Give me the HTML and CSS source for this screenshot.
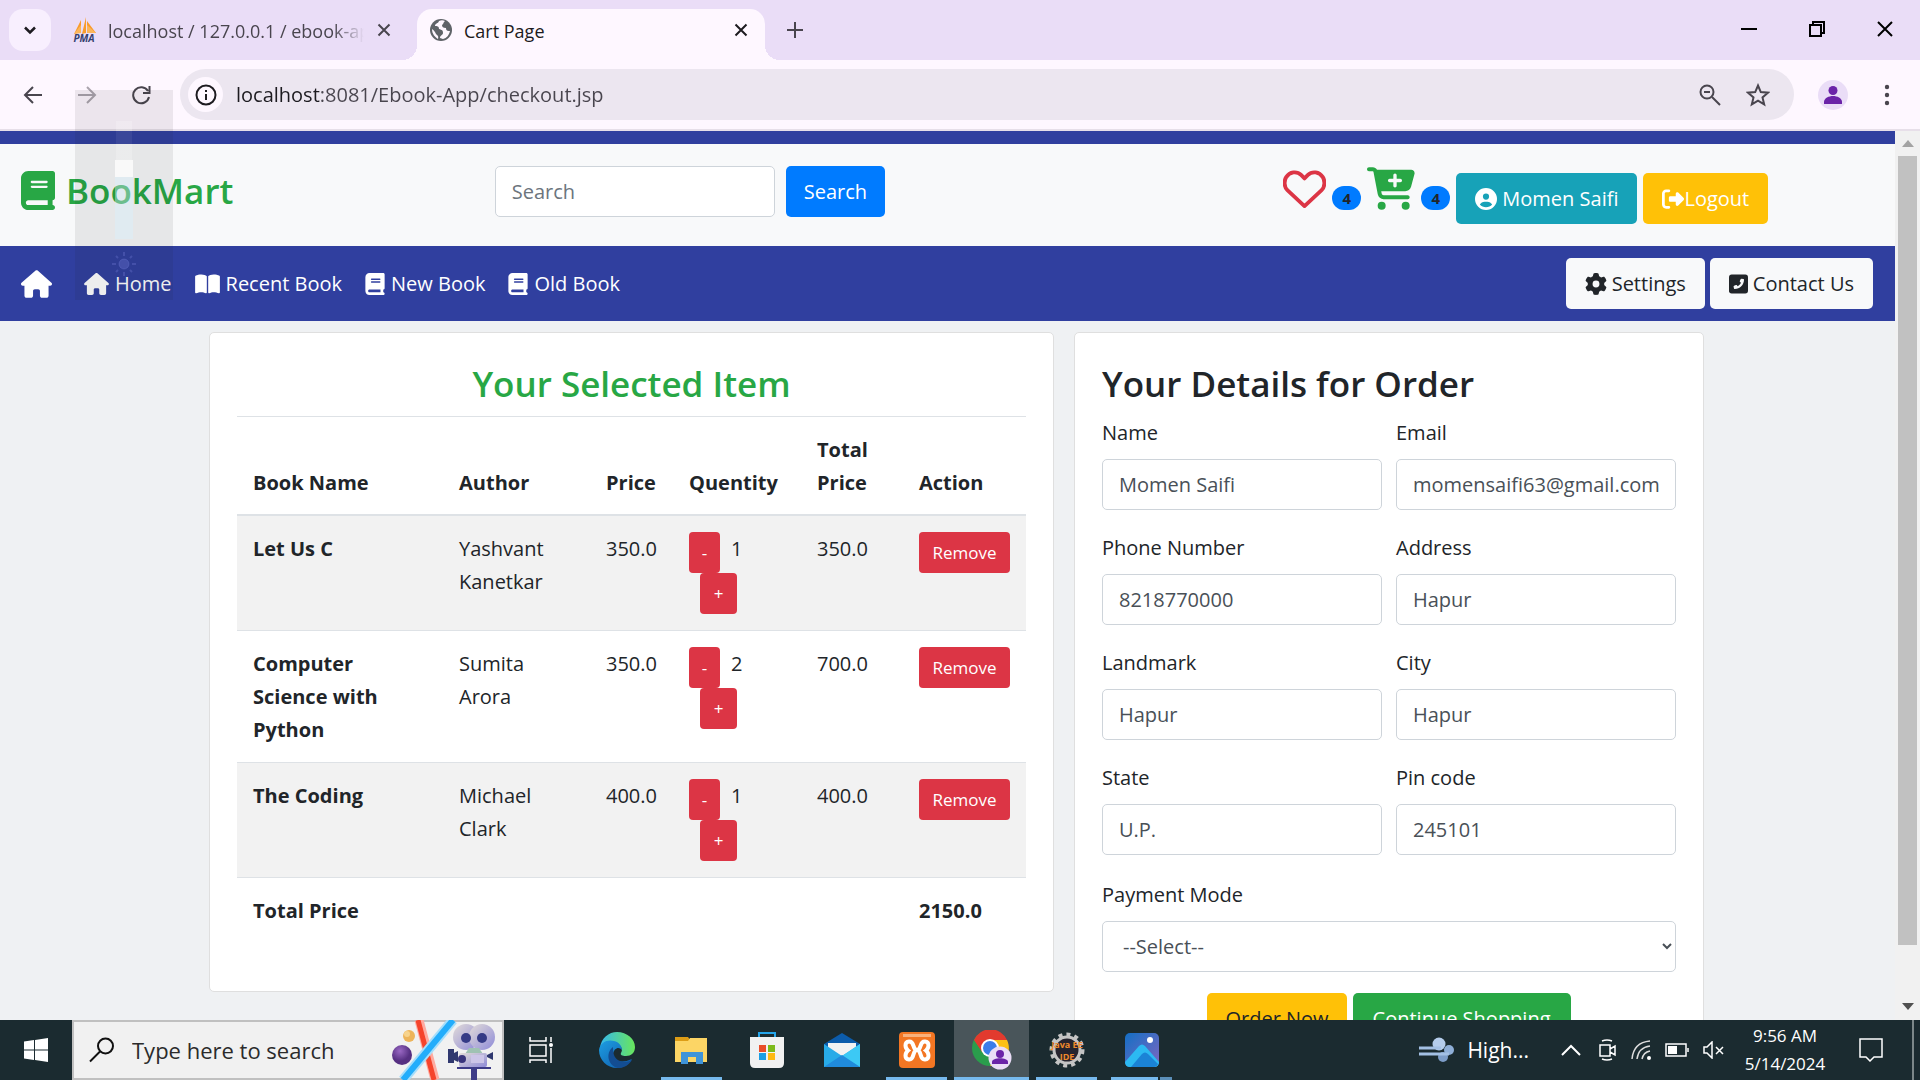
FILE: index.html
```html
<!DOCTYPE html>
<html lang="en">
<head>
<meta charset="utf-8">
<title>Cart Page</title>
<link rel="stylesheet" href="styles.css">
</head>
<body>
<svg class="symbols" aria-hidden="true">
  <symbol id="book" viewBox="0 0 448 512"><path d="M96 0C43 0 0 43 0 96V416c0 53 43 96 96 96H384h32c17.700 0 32-14.300 32-32s-14.300-32-32-32V384c17.700 0 32-14.300 32-32V32c0-17.700-14.300-32-32-32H384 96zm0 384H352v64H96c-17.700 0-32-14.300-32-32s14.300-32 32-32zm32-240c0-8.800 7.200-16 16-16H336c8.800 0 16 7.200 16 16s-7.200 16-16 16H144c-8.800 0-16-7.200-16-16zm16 48H336c8.800 0 16 7.200 16 16s-7.200 16-16 16H144c-8.800 0-16-7.200-16-16s7.200-16 16-16z"/></symbol>
  <symbol id="house" viewBox="0 0 576 512"><path d="M575.800 255.500c0 18-15 32.100-32 32.100h-32l.7 160.200c0 2.700-.2 5.400-.5 8.100V472c0 22.100-17.900 40-40 40H392c-22.100 0-40-17.900-40-40V384c0-17.700-14.300-32-32-32H256c-17.700 0-32 14.300-32 32v88c0 22.100-17.900 40-40 40H104c-22.100 0-40-17.900-40-40V287.600H32c-18 0-32-14-32-32.100c0-9 3-17 10-24L266.400 8c7-7 15-8 22-8s15 2 21 7L564.800 231.500c8 7 12 15 11 24z"/></symbol>
  <symbol id="book-open" viewBox="0 0 576 512"><path d="M249.600 471.500c10.800 3.800 22.400-4.100 22.400-15.500V78.600c0-4.200-1.600-8.400-5-11C247.400 52 202.400 32 144 32C93.500 32 46.300 45.300 18.100 56.100C6.800 60.500 0 71.700 0 83.800V454.100c0 11.900 12.800 20.200 24.100 16.500C55.600 460.100 105.500 448 144 448c33.900 0 79 14 105.600 23.500zm76.800 0C353 462 398.100 448 432 448c38.500 0 88.400 12.100 119.900 22.600c11.300 3.800 24.100-4.600 24.100-16.500V83.800c0-12.100-6.800-23.300-18.100-27.600C529.700 45.300 482.500 32 432 32c-58.400 0-103.400 20-123 35.600c-3.300 2.600-5 6.800-5 11V456c0 11.400 11.700 19.300 22.400 15.500z"/></symbol>
  <symbol id="cross" viewBox="0 0 16 16"><path d="M2.500 2.500l11 11M13.500 2.500l-11 11" stroke="currentColor" stroke-width="2" fill="none"/></symbol>
</svg>

<div class="tabstrip">
  <button class="tab-search" aria-label="Search tabs"><svg width="16" height="16" viewBox="0 0 16 16"><path d="M3 5.500l5 5 5-5" fill="none" stroke="#1d1b20" stroke-width="2.500"/></svg></button>
  <div class="tab">
    <svg class="favicon" width="24" height="28" viewBox="0 0 24 28"><path d="M2 18L9 4v12zM10 18L14 1v16zM15 17V5l9 12z" fill="#f89c2c"/><path d="M2 18l7-9v8zM15 17V9l9 8z" fill="#fbb65b"/><text x="12" y="26" text-anchor="middle" class="pma">PMA</text></svg>
    <span class="tab-title fading">localhost / 127.0.0.1 / ebook-app</span>
    <button class="plain" aria-label="Close tab"><svg width="16" height="16"><use href="#cross"/></svg></button>
  </div>
  <div class="tab active">
    <svg width="22" height="22" viewBox="0 0 22 22"><circle cx="11" cy="11" r="11" fill="#5f6368"/><path d="M9 2c-1 3-4 2-4 5 2 0 4 0 4 3 3 1 4 1 4 4 0 2-3 2-3 5l3 1c4-1 6-4 7-8-2 0-4 0-4-3-3 0-4-1-4-3 2-1 1-3 3-4-2-1-4-1-6 0zM2 10c0 5 3 8 6 10 1-3-1-4-2-5-1-2-2-4-4-5z" fill="#fef7ff"/></svg>
    <span class="tab-title">Cart Page</span>
    <button class="plain" aria-label="Close tab"><svg width="16" height="16"><use href="#cross"/></svg></button>
  </div>
  <button class="plain new-tab" aria-label="New tab"><svg width="18" height="18" viewBox="0 0 18 18"><path d="M9 1v16M1 9h16" stroke="#49454e" stroke-width="2"/></svg></button>
  <div class="window-controls">
    <button class="plain" aria-label="Minimize"><svg width="16" height="16" viewBox="0 0 16 16"><path d="M0 8h16" stroke="#000" stroke-width="2"/></svg></button>
    <button class="plain" aria-label="Restore"><svg width="16" height="16" viewBox="0 0 16 16"><path d="M1 4h11v11H1zM4 4V1h11v11h-3" fill="none" stroke="#000" stroke-width="2"/></svg></button>
    <button class="plain" aria-label="Close"><svg width="16" height="16" viewBox="0 0 16 16"><path d="M1 1l14 14M15 1L1 15" stroke="#000" stroke-width="2"/></svg></button>
  </div>
</div>

<div class="toolbar">
  <div class="history">
    <button class="plain" aria-label="Back"><svg width="20" height="20" viewBox="0 0 20 20"><path d="M19 10H2M10 2l-8 8 8 8" fill="none" stroke="#49454e" stroke-width="2"/></svg></button>
    <button class="plain" aria-label="Forward"><svg width="20" height="20" viewBox="0 0 20 20"><path d="M1 10h17M10 2l8 8-8 8" fill="none" stroke="#aaa3ad" stroke-width="2"/></svg></button>
    <button class="plain" aria-label="Reload"><svg width="20" height="20" viewBox="0 0 20 20"><path d="M17 6A8 8 0 1 0 18 12M18.500 1v7H12" fill="none" stroke="#49454e" stroke-width="2"/></svg></button>
  </div>
  <div class="omnibox">
    <button class="site-info" aria-label="Site information"><svg width="22" height="22" viewBox="0 0 22 22"><circle cx="11" cy="11" r="9.500" fill="none" stroke="#1d1b20" stroke-width="2"/><path d="M11 10v6M11 6v2" stroke="#1d1b20" stroke-width="2"/></svg></button>
    <input class="url" type="text" aria-label="Address" value="localhost:8081/Ebook-App/checkout.jsp">
    <button class="plain" aria-label="Zoom"><svg width="22" height="22" viewBox="0 0 22 22"><circle cx="8" cy="8" r="6.500" fill="none" stroke="#49454e" stroke-width="2"/><path d="M5 8h6M13 13l8 8" stroke="#49454e" stroke-width="2"/></svg></button>
    <button class="plain" aria-label="Bookmark"><svg width="24" height="24" viewBox="0 0 24 24"><path d="M12 2.500l2.800 6.600 7.200.6-5.500 4.700 1.700 7L12 17.700l-6.200 3.700 1.700-7L2 9.700l7.200-.6z" fill="none" stroke="#49454e" stroke-width="2"/></svg></button>
  </div>
  <button class="plain profile" aria-label="Profile"><svg width="30" height="30" viewBox="0 0 30 30"><circle cx="15" cy="15" r="15" fill="#eaddf7"/><circle cx="15" cy="10.500" r="4.500" fill="#6b23a8"/><path d="M6 24v-2c0-4 5-6 9-6s9 2 9 6v2z" fill="#6b23a8"/></svg></button>
  <button class="plain" aria-label="Menu"><svg width="6" height="22" viewBox="0 0 6 22"><g fill="#49454e"><circle cx="3" cy="3" r="2.200"/><circle cx="3" cy="11" r="2.200"/><circle cx="3" cy="19" r="2.200"/></g></svg></button>
</div>

<div class="viewport">
  <div class="page">
    <div class="topline"></div>
    <header class="header">
      <h3 class="brand"><svg width="34" height="39"><use href="#book"/></svg>BookMart</h3>
      <form class="search">
        <input class="control" type="search" placeholder="Search" aria-label="Search">
        <button class="btn primary" type="button">Search</button>
      </form>
      <div class="actions">
        <a href="#" class="icon-link" aria-label="Wishlist"><svg width="43" height="43" viewBox="0 0 512 512"><path d="M256 465L52 276C10 237 12 160 38 120 80 55 165 45 215 95l41 41 41-41c50-50 135-40 177 25 26 40 28 117-14 156z" fill="none" stroke="#dc3545" stroke-width="46" stroke-linejoin="round"/></svg></a>
        <span class="badge">4</span>
        <a href="#" class="icon-link" aria-label="Cart"><svg width="48" height="43" viewBox="0 0 576 512"><path fill="#28a745" fill-rule="evenodd" d="M0 24C0 10.700 10.700 0 24 0H69.500c22 0 41.500 12.800 50.600 32h411c26.300 0 45.500 25 38.600 50.400l-41 152.300c-8.500 31.400-37 53.300-69.500 53.300H170.700l5.400 28.500c2.200 11.300 12.100 19.500 23.600 19.500H488c13.300 0 24 10.700 24 24s-10.700 24-24 24H199.700c-34.600 0-64.300-24.600-70.700-58.500L77.400 54.500c-.7-3.800-4-6.500-7.900-6.500H24C10.700 48 0 37.300 0 24zM128 464a48 48 0 1 1 96 0 48 48 0 1 1-96 0zm336-48a48 48 0 1 1 0 96 48 48 0 1 1 0-96zM252 160c0 11 9 20 20 20h44v44c0 11 9 20 20 20s20-9 20-20V180h44c11 0 20-9 20-20s-9-20-20-20H356V96c0-11-9-20-20-20s-20 9-20 20v44H272c-11 0-20 9-20 20z"/></svg></a>
        <span class="badge">4</span>
        <a href="#" class="btn info"><svg width="22" height="22" viewBox="0 0 512 512"><path d="M399 384C377 346 335 320 288 320H224c-47 0-89 26-111 64c35 39 86 64 143 64s108-25 143-64zM0 256a256 256 0 1 1 512 0A256 256 0 1 1 0 256zm256 16a72 72 0 1 0 0-144 72 72 0 1 0 0 144z"/></svg>Momen Saifi</a>
        <a href="#" class="btn warning logout"><svg width="22" height="22" viewBox="0 0 512 512"><path d="M377.900 105.900L500.700 228.700c7.200 7.200 11.300 17.100 11.300 27.300s-4.100 20.100-11.300 27.300L377.900 406.100c-6.400 6.400-15 9.900-24 9.900c-18.700 0-33.900-15.200-33.900-33.900v-62.100h-128c-17.700 0-32-14.300-32-32v-64c0-17.700 14.300-32 32-32h128v-62.100c0-18.700 15.200-33.900 33.900-33.900c9 0 17.600 3.600 24 9.900zM160 96H96c-17.700 0-32 14.300-32 32v256c0 17.700 14.300 32 32 32h64c17.700 0 32 14.300 32 32s-14.300 32-32 32H96c-53 0-96-43-96-96V128C0 75 43 32 96 32h64c17.700 0 32 14.300 32 32s-14.300 32-32 32z"/></svg>Logout</a>
      </div>
    </header>
    <nav class="nav">
      <a href="#" class="nav-brand" aria-label="Start page"><svg width="31" height="28"><use href="#house"/></svg></a>
      <a href="#"><svg width="25" height="22"><use href="#house"/></svg>Home</a>
      <a href="#"><svg width="25" height="22"><use href="#book-open"/></svg>Recent Book</a>
      <a href="#"><svg width="20" height="22"><use href="#book"/></svg>New Book</a>
      <a href="#"><svg width="20" height="22"><use href="#book"/></svg>Old Book</a>
      <div class="nav-end">
        <a href="#" class="btn light"><svg width="22" height="22" viewBox="0 0 512 512"><path d="M495.900 166.600c3.200 8.700 .5 18.400-6.400 24.600l-43.300 39.400c1.100 8.300 1.700 16.800 1.700 25.400s-.6 17.100-1.700 25.400l43.300 39.400c6.900 6.200 9.600 15.900 6.400 24.600c-4.400 11.900-9.700 23.300-15.800 34.300l-4.700 8.100c-6.600 11-14 21.400-22.100 31.200c-5.900 7.200-15.700 9.600-24.500 6.800l-55.700-17.700c-13.400 10.300-28.200 18.900-44 25.400l-12.500 57.100c-2 9.100-9 16.300-18.200 17.800c-13.800 2.300-28 3.500-42.500 3.500s-28.700-1.200-42.500-3.500c-9.200-1.500-16.200-8.700-18.200-17.800l-12.500-57.100c-15.800-6.500-30.600-15.100-44-25.400L83.100 425.900c-8.800 2.800-18.600 .3-24.500-6.800c-8.100-9.800-15.500-20.200-22.100-31.200l-4.700-8.100c-6.100-11-11.400-22.400-15.800-34.300c-3.200-8.700-.5-18.400 6.400-24.600l43.300-39.400C64.600 273.100 64 264.600 64 256s.6-17.100 1.700-25.400L22.400 191.200c-6.900-6.200-9.600-15.900-6.400-24.600c4.400-11.900 9.700-23.300 15.800-34.300l4.700-8.100c6.600-11 14-21.400 22.100-31.200c5.900-7.200 15.700-9.600 24.500-6.800l55.700 17.700c13.400-10.300 28.200-18.900 44-25.400l12.500-57.100c2-9.100 9-16.300 18.200-17.800C227.300 1.200 241.500 0 256 0s28.700 1.200 42.500 3.500c9.200 1.500 16.200 8.700 18.200 17.800l12.500 57.100c15.800 6.500 30.600 15.100 44 25.400l55.700-17.700c8.800-2.800 18.600-.3 24.500 6.800c8.100 9.800 15.500 20.200 22.100 31.200l4.700 8.100c6.100 11 11.400 22.400 15.800 34.300zM256 336a80 80 0 1 0 0-160 80 80 0 1 0 0 160z"/></svg>Settings</a>
        <a href="#" class="btn light"><svg width="19" height="22" viewBox="0 0 448 512"><rect y="32" width="448" height="448" rx="64"/><path fill="#f8f9fa" d="M298 130l42 10c8 2 14 9 14 18 0 120-98 218-218 218-9 0-16-6-18-14l-10-42c-2-9 2-18 11-22l45-19c8-3 17-1 22 5l19 23c34-16 62-44 78-78l-23-19c-6-5-8-14-5-22l19-45c4-9 14-15 24-13z"/></svg>Contact Us</a>
      </div>
    </nav>

    <main class="content">
      <section class="card">
        <h3 class="title green">Your Selected Item</h3>
        <table class="items">
          <colgroup><col class="c-name"><col class="c-author"><col class="c-price"><col class="c-qty"><col class="c-total"><col class="c-action"></colgroup>
          <thead><tr><th scope="col">Book Name</th><th scope="col">Author</th><th scope="col">Price</th><th scope="col">Quentity</th><th scope="col">Total Price</th><th scope="col">Action</th></tr></thead>
          <tbody>
            <tr><th scope="row">Let Us C</th><td>Yashvant Kanetkar</td><td>350.0</td><td><div class="qty"><button class="btn-sm minus">-</button><span>1</span><button class="btn-sm plus">+</button></div></td><td>350.0</td><td><button class="btn-sm remove">Remove</button></td></tr>
            <tr><th scope="row">Computer Science with Python</th><td>Sumita Arora</td><td>350.0</td><td><div class="qty"><button class="btn-sm minus">-</button><span>2</span><button class="btn-sm plus">+</button></div></td><td>700.0</td><td><button class="btn-sm remove">Remove</button></td></tr>
            <tr><th scope="row">The Coding</th><td>Michael Clark</td><td>400.0</td><td><div class="qty"><button class="btn-sm minus">-</button><span>1</span><button class="btn-sm plus">+</button></div></td><td>400.0</td><td><button class="btn-sm remove">Remove</button></td></tr>
            <tr><th scope="row">Total Price</th><td></td><td></td><td></td><td></td><th>2150.0</th></tr>
          </tbody>
        </table>
      </section>

      <section class="card">
        <h3 class="title">Your Details for Order</h3>
        <form class="details">
          <div class="field"><label for="name">Name</label><input class="control" id="name" type="text" value="Momen Saifi"></div>
          <div class="field"><label for="email">Email</label><input class="control" id="email" type="text" value="momensaifi63@gmail.com"></div>
          <div class="field"><label for="phone">Phone Number</label><input class="control" id="phone" type="text" value="8218770000"></div>
          <div class="field"><label for="address">Address</label><input class="control" id="address" type="text" value="Hapur"></div>
          <div class="field"><label for="landmark">Landmark</label><input class="control" id="landmark" type="text" value="Hapur"></div>
          <div class="field"><label for="city">City</label><input class="control" id="city" type="text" value="Hapur"></div>
          <div class="field"><label for="state">State</label><input class="control" id="state" type="text" value="U.P."></div>
          <div class="field"><label for="pin">Pin code</label><input class="control" id="pin" type="text" value="245101"></div>
          <div class="field wide"><label for="payment">Payment Mode</label><select class="control" id="payment"><option>--Select--</option><option>Cash On Delivery</option></select></div>
          <div class="submit wide"><button class="btn warning dark" type="button">Order Now</button><a href="#" class="btn success">Continue Shopping</a></div>
        </form>
      </section>
    </main>
  </div>
  <div class="scrollbar">
    <svg width="12" height="8" viewBox="0 0 12 8"><path d="M6 0l6 7H0z" fill="#a3a3a3"/></svg>
    <div class="track"><div class="thumb"></div></div>
    <svg width="12" height="8" viewBox="0 0 12 8"><path d="M6 7l6-7H0z" fill="#505050"/></svg>
  </div>
</div>

<div class="flyout">
  <div class="level-rest"></div><div class="level-thumb"></div><div class="level-fill"></div>
  <svg width="26" height="26" viewBox="0 0 26 26"><circle cx="13" cy="13" r="5"/><path d="M13 1v4M13 21v4M1 13h4M21 13h4M5 5l2 2M19 19l2 2M21 5l-2 2M5 21l2-2" stroke-width="2"/></svg>
</div>

<footer class="taskbar">
  <button class="plain start" aria-label="Start"><svg width="24" height="24" viewBox="0 0 24 24"><path d="M0 3.500l10-1.500v9.500H0zM11 2l13-2v11.500H11zM0 12.500h10V22L0 20.500zM11 12.500h13V24l-13-2z" fill="#fff"/></svg></button>
  <div class="task-search">
    <svg width="26" height="26" viewBox="0 0 26 26"><circle cx="16.500" cy="9" r="7.500" fill="none" stroke="#111" stroke-width="2"/><path d="M11 14.500L1 24.500" stroke="#111" stroke-width="2"/></svg>
    <input type="text" placeholder="Type here to search" aria-label="Type here to search">
    <svg width="106" height="60" viewBox="0 0 106 60">
      <defs><linearGradient id="cam" x1="0" y1="0" x2="1" y2="1"><stop offset="0" stop-color="#e2dcd8"/><stop offset="1" stop-color="#8f8bd8"/></linearGradient><radialGradient id="moon" cx=".4" cy=".3"><stop offset="0" stop-color="#9a68c4"/><stop offset="1" stop-color="#563082"/></radialGradient></defs>
      <path d="M27 0L43 60" stroke="#ffaa9f" stroke-width="9"/><path d="M26 0L42 60" stroke="#f5442c" stroke-width="5"/>
      <path d="M61 0L11 60" stroke="#a5defb" stroke-width="10"/><path d="M61 0L11 60" stroke="#22adfb" stroke-width="6"/>
      <circle cx="10" cy="35" r="10" fill="url(#moon)"/><circle cx="17" cy="16" r="6" fill="#edb45a"/><circle cx="15" cy="14" r="3" fill="#f7d38c"/>
      <circle cx="74" cy="17" r="13" fill="url(#cam)"/><circle cx="90" cy="17" r="13" fill="url(#cam)"/><circle cx="74" cy="18" r="5" fill="#343a86"/><circle cx="90" cy="18" r="5" fill="#343a86"/>
      <path d="M77 28h10l4 6H73z" fill="#9fc2b3"/><rect x="67" y="33" width="28" height="14" rx="2" fill="url(#cam)"/><rect x="79" y="35" width="13" height="8" fill="#ccc5e8"/><path d="M56 29h6v14h-6zM62 33l4-2v11l-4-2zM95 35l6-3v8l-6-3z" fill="#30386f"/><circle cx="70" cy="39" r="4" fill="#39347c"/><path d="M65 47h34v2H65zM79 49h6v11h-6z" fill="#3d3b88"/>
    </svg>
  </div>
  <div class="apps">
    <button class="app" aria-label="Task view"><svg width="26" height="26" viewBox="0 0 26 26"><path d="M1 0v4h16V0M1 8h16v11H1zM1 26v-3h16v3M22 0v5M22 11v15" fill="none" stroke="#fff" stroke-width="1.500"/><circle cx="22" cy="8" r="2" fill="#fff"/></svg></button>
    <button class="app" aria-label="Edge"><svg width="36" height="36" viewBox="0 0 36 36"><defs><linearGradient id="e1"><stop offset="0" stop-color="#35b8ee"/><stop offset="1" stop-color="#69e65b"/></linearGradient><linearGradient id="e2" x2="1" y2="1"><stop offset="0" stop-color="#1d9ee2"/><stop offset="1" stop-color="#0f58a8"/></linearGradient></defs><path d="M1 16C2 6 10 0 18 0c10 0 18 7 18 15 0 6-4 9-9 9-4 0-6-1-5-3 2-3 1-8-5-8-6-1-13 0-16 3z" fill="url(#e1)"/><path d="M0 18c1-8 9-11 15-9 5 1 8 5 8 9-3-4-8-2-9 4 0 7 8 10 19 5-4 6-9 9-15 9C8 36 0 28 0 18z" fill="url(#e2)"/><path d="M14 15c-8 6-5 19 5 21 6 0 11-3 14-8-8 4-16 1-18-5-1-3-1-5-1-8z" fill="#134d92"/></svg></button>
    <button class="app running" aria-label="File Explorer"><svg width="34" height="28" viewBox="0 0 34 28"><path d="M0 1h13l3 4H0z" fill="#dd9d16"/><path d="M0 5h13l2-3h17v24H0z" fill="#fcd565"/><path d="M6 28V16h22v12h-7v-7h-8v7z" fill="#3f94d9"/></svg></button>
    <button class="app" aria-label="Store"><svg width="34" height="36" viewBox="0 0 34 36"><path d="M9 6V1h16v5" fill="none" stroke="#25a5ea" stroke-width="2"/><path d="M0 5h34v26q0 5-5 5H5q-5 0-5-5z" fill="#f1f1f1"/><path d="M9 13h7v7H9z" fill="#e94d29"/><path d="M18 13h7v7h-7z" fill="#7dba1b"/><path d="M9 21h7v7H9z" fill="#1c9ee3"/><path d="M18 21h7v7h-7z" fill="#fdb913"/></svg></button>
    <button class="app" aria-label="Mail"><svg width="36" height="34" viewBox="0 0 36 34"><path d="M0 11L18 0l18 11v8H0z" fill="#0c5cab"/><path d="M4 10h28v10L18 23 4 20z" fill="#f2f2f2"/><path d="M0 11l18 12L36 11v23H0z" fill="#28abe8"/><path d="M36 11L18 23l18 11z" fill="#3cc9f5"/><path d="M0 34l18-12 18 12z" fill="#208bdc"/></svg></button>
    <button class="app running" aria-label="XAMPP"><svg width="36" height="36" viewBox="0 0 36 36"><rect width="36" height="36" rx="4" fill="#f37623"/><path d="M4 2h28v3H4z" fill="#f9b17c"/><path d="M18 18C13 18 16 9 10 9.500 5 10 6 16 9 18.500 6 21 5 27 10 27.500 16 28 13 18 18 18zM18 18C23 18 20 9 26 9.500 31 10 30 16 27 18.500 30 21 31 27 26 27.500 20 28 23 18 18 18z" fill="none" stroke="#fff" stroke-width="4"/></svg></button>
    <button class="app running current" aria-label="Chrome"><svg width="40" height="40" viewBox="0 0 40 40"><circle cx="18" cy="18" r="18" fill="#2a9d4c"/><path d="M2 10A18 18 0 0 1 35 10H18l-8 12z" fill="#e23a2e"/><path d="M35 10a18 18 0 0 1-17 26l8-14-8-12z" fill="#fbc116"/><circle cx="18" cy="18" r="9" fill="#fff"/><circle cx="18" cy="18" r="7" fill="#3b7de9"/><circle cx="28" cy="28" r="11.500" fill="#eaddf7"/><circle cx="28" cy="24" r="4" fill="#6b23a8"/><path d="M20 34v-2c0-5 16-5 16 0v2z" fill="#6b23a8"/></svg></button>
    <button class="app running" aria-label="Java EE IDE"><svg width="42" height="36" viewBox="0 0 42 36"><circle cx="21" cy="18" r="13" fill="#26242e" stroke="#c4c4c4" stroke-width="3"/><circle cx="21" cy="18" r="15.500" fill="none" stroke="#c4c4c4" stroke-width="4" stroke-dasharray="4 4"/><text x="21" y="16" text-anchor="middle" class="ide">Java EE</text><text x="21" y="28" text-anchor="middle" class="ide">IDE</text></svg></button>
    <button class="app running stacked" aria-label="Photos"><svg width="34" height="34" viewBox="0 0 34 34"><defs><linearGradient id="ph" x2="1" y2="1"><stop offset="0" stop-color="#136fc5"/><stop offset="1" stop-color="#7f67c0"/></linearGradient></defs><rect width="34" height="34" rx="5" fill="url(#ph)"/><circle cx="25" cy="7" r="3" fill="#fff"/><path d="M0 29l14-16q3-3 6 0l14 16q0 5-5 5H5q-5 0-5-5z" fill="#2cb9f2"/><path d="M6 34l11-13q3-3 6 0l10 10q-1 3-4 3z" fill="#1b83d6"/></svg></button>
  </div>
  <div class="tray">
    <a href="#" class="weather"><svg width="36" height="26" viewBox="0 0 36 26"><circle cx="20" cy="7" r="6.500" fill="#b5cdec"/><circle cx="30" cy="13" r="5" fill="#8fafd8"/><circle cx="24" cy="20" r="5" fill="#7d9dc8"/><path d="M0 11h22M0 17h30" stroke="#a3c0e4" stroke-width="3"/></svg>High...</a>
    <button class="plain overflow" aria-label="Hidden icons"><svg width="20" height="12" viewBox="0 0 20 12"><path d="M1 11l9-9 9 9" fill="none" stroke="#fff" stroke-width="2"/></svg></button>
    <svg width="18" height="22" viewBox="0 0 18 22"><path d="M1 6h10v11H1zM11 10l5-3v9l-5-3M3 2q5-2 10 0M3 20q5 2 10 0" fill="none" stroke="#fff" stroke-width="1.500"/></svg>
    <svg width="20" height="20" viewBox="0 0 20 20"><path d="M1 19C2 8 8 2 19 1M6 19C7 11 11 7 19 6M11 19c1-5 3-7 8-8" fill="none" stroke="#ddd" stroke-width="1.500"/><circle cx="18" cy="18" r="2" fill="#fff"/></svg>
    <svg width="24" height="14" viewBox="0 0 24 14"><path d="M1 1h20v12H1zM23 5v4" fill="none" stroke="#fff" stroke-width="1.500"/><path d="M3 3h9v8H3z" fill="#fff"/></svg>
    <svg width="22" height="18" viewBox="0 0 22 18"><path d="M1 6h3l5-5v16l-5-5H1zM13 6l7 7M20 6l-7 7" fill="none" stroke="#fff" stroke-width="1.500"/></svg>
    <div class="clock"><span>9:56 AM</span><span>5/14/2024</span></div>
    <button class="plain" aria-label="Notifications"><svg width="24" height="24" viewBox="0 0 24 24"><path d="M1 1h22v18H15l-4 4-4-4H1z" fill="none" stroke="#fff" stroke-width="1.500"/></svg></button>
    <span class="peek"></span>
  </div>
</footer>
</body>
</html>
```
FILE: styles.css
```css
* { box-sizing: border-box; }
body {
  margin: 0;
  height: 100vh;
  display: flex;
  flex-direction: column;
  overflow: hidden;
  font-family: "Open Sans", "Noto Sans", sans-serif;
  font-size: 20px;
  line-height: 32px;
  color: #212529;
}
svg { display: block; flex: none; fill: currentColor; }
.symbols { position: absolute; width: 0; height: 0; }
a { color: inherit; text-decoration: none; }
button, input, select { font: inherit; color: inherit; }
button { white-space: nowrap; }
.plain { border: 0; padding: 0; background: none; display: flex; }

/* Browser frame */
.tabstrip {
  flex: none;
  height: 60px;
  display: flex;
  align-items: stretch;
  background: #eaddf7;
  padding: 9px 27px 0 9px;
  color: #49454e;
  font-size: 18px;
}
.tab-search {
  width: 42px;
  height: 42px;
  display: grid;
  place-items: center;
  border: 0;
  padding: 0;
  border-radius: 14px;
  background: #f8effe;
}
.tab {
  width: 366px;
  display: flex;
  align-items: center;
  gap: 12px;
  padding: 0 25px 9px 21px;
}
.tab-title { flex: 1; overflow: hidden; white-space: nowrap; padding-top: 2px; }
.fading { mask-image: linear-gradient(90deg, #000 88%, transparent); }
.tab.active {
  position: relative;
  width: 348px;
  padding: 0 16px 9px 13px;
  background: #fef7ff;
  border-radius: 15px 15px 0 0;
  color: #1d1b20;
}
.tab.active::before, .tab.active::after {
  content: "";
  position: absolute;
  bottom: 0;
  width: 15px;
  height: 15px;
}
.tab.active::before { right: 100%; background: radial-gradient(circle at 0 0, transparent 15px, #fef7ff 15px); }
.tab.active::after { left: 100%; background: radial-gradient(circle at 100% 0, transparent 15px, #fef7ff 15px); }
.new-tab { margin-left: 21px; padding-top: 12px; }
.window-controls { margin-left: auto; display: flex; gap: 52px; padding-top: 12px; }
.favicon { overflow: visible; }
.pma { font: italic 700 10px "Open Sans", sans-serif; fill: #34406f; }

.toolbar {
  flex: none;
  height: 71px;
  display: flex;
  align-items: center;
  background: #fef7ff;
  border-bottom: 2px solid #e7dfe9;
  padding: 0 30px 0 23px;
}
.history { display: flex; gap: 34px; margin-right: 29px; }
.omnibox {
  flex: 1;
  height: 51px;
  display: flex;
  align-items: center;
  gap: 25px;
  padding: 0 24px 0 8px;
  border-radius: 26px;
  background: #ece6f0;
}
.site-info {
  width: 35px;
  height: 35px;
  display: grid;
  place-items: center;
  padding: 0;
  border: 0;
  border-radius: 50%;
  background: #fef7ff;
}
.url {
  flex: 1;
  min-width: 0;
  margin-left: -12px;
  border: 0;
  padding: 0;
  color: transparent;
  background: linear-gradient(90deg, #1d1b20 84px, #49454e 84px);
  background-clip: text;
}
.profile { margin: 0 36px 0 24px; }

/* Page */
.viewport { flex: 1; min-height: 0; display: flex; overflow: hidden; }
.page { flex: 1; min-width: 0; background: #eff1f3; }
.topline { height: 13px; background: #303f9f; }
.header {
  display: grid;
  grid-template-columns: 3fr 5fr 4fr;
  padding: 22px 0;
  background: #f8f9fa;
}
.header > * { padding-left: 21px; height: 58px; }
.brand {
  margin: 0;
  display: flex;
  gap: 11px;
  font-size: 35px;
  line-height: 50px;
  font-weight: 600;
  color: #28a745;
}
.brand svg { margin-top: 5px; }
.search { display: flex; gap: 11px; align-items: flex-start; }
.search .control { width: 280px; }
.header > .actions { display: flex; gap: 6px; align-items: flex-end; padding-left: 20px; }
.icon-link, .badge { margin-bottom: 14px; }
.badge {
  width: 29px;
  height: 24px;
  border-radius: 12px;
  background: #007bff;
  font-size: 15px;
  line-height: 24px;
  font-weight: 700;
  text-align: center;
}
.control {
  display: block;
  width: 100%;
  height: 51px;
  padding: 8px 16px;
  border: 1px solid #ced4da;
  border-radius: 5px;
  background: #fff;
  color: #495057;
}
.control::placeholder { color: #6c757d; }
.btn {
  height: 51px;
  display: inline-flex;
  align-items: center;
  gap: 5px;
  padding: 0 18px;
  border: 0;
  border-radius: 5px;
  white-space: nowrap;
  color: #fff;
}
.primary { background: #007bff; }
.info { background: #17a2b8; }
.actions .btn { padding: 0 19px; }
.warning { background: #ffc107; }
.success { background: #28a745; padding: 0 20px; }
.light { background: #f8f9fa; color: #212529; }
.dark { color: #212529; }
.logout { gap: 0; }

.nav {
  display: flex;
  align-items: center;
  gap: 23px;
  height: 75px;
  padding: 0 22px 0 21px;
  background: #303f9f;
  color: #fff;
}
.nav > a { display: flex; align-items: center; gap: 6px; }
.nav > .nav-brand { margin-right: 9px; }
.nav-end { margin-left: auto; display: flex; gap: 5px; }
.nav-end .btn { padding: 0 19px; }

.content {
  display: grid;
  grid-template-columns: 845fr 630fr;
  align-items: start;
  gap: 20px;
  padding: 11px 191px 0 209px;
}
.card {
  padding: 27px;
  border: 1px solid #dfdfdf;
  border-radius: 5px;
  background: #fff;
}
.title { margin: 0 0 9px; font-size: 35px; line-height: 47px; font-weight: 600; }
.green { color: #28a745; text-align: center; }

.items {
  width: 100%;
  margin-bottom: 21px;
  table-layout: fixed;
  border-spacing: 0;
  text-align: left;
  line-height: 33px;
}
.c-name { width: 206px; }
.c-author { width: 147px; }
.c-price { width: 83px; }
.c-qty { width: 128px; }
.c-total { width: 102px; }
.c-action { width: 123px; }
.items th, .items td { padding: 16px; border-top: 1px solid #dee2e6; vertical-align: top; }
.items td:nth-child(6) { padding-right: 0; }
.items thead th { vertical-align: bottom; border-bottom: 2px solid #dee2e6; padding-bottom: 15px; }
.items tbody tr:first-child > * { border-top: 0; }
.items tbody tr:nth-child(odd) { background: #f2f2f2; }
.qty { display: flex; flex-wrap: wrap; }
.qty span { margin-left: 11px; }
.btn-sm {
  height: 41px;
  padding: 0;
  border: 0;
  border-radius: 4px;
  background: #dc3545;
  color: #fff;
  font-size: 17px;
}
.minus { width: 31px; }
.plus { width: 37px; margin-left: 11px; }
.qty .plus { margin-right: 40px; }
.remove { width: 91px; }

.details { display: grid; grid-template-columns: 1fr 1fr; gap: 21px 14px; }
.field label { display: block; margin-bottom: 9px; line-height: 34px; }
.field.wide { padding-top: 2px; }
.wide { grid-column: 1 / -1; }
select.control { appearance: auto; }
.submit { display: flex; justify-content: center; gap: 6px; }

.scrollbar {
  width: 25px;
  display: flex;
  flex-direction: column;
  align-items: center;
  gap: 8px;
  padding: 9px 0;
  background: #f1f1f1;
}
.track { flex: 1; width: 19px; }
.thumb { height: 94%; background: #c1c1c1; }

/* Brightness flyout over the page */
.flyout {
  position: absolute;
  left: 75px;
  top: 90px;
  width: 98px;
  height: 210px;
  padding-top: 31px;
  display: flex;
  flex-direction: column;
  align-items: center;
  background: rgba(30, 30, 30, 0.08);
}
.flyout svg { margin-top: 12px; fill: rgba(120, 130, 220, 0.3); stroke: rgba(120, 130, 220, 0.3); }
.level-rest { width: 16px; height: 39px; background: linear-gradient(rgba(255, 255, 255, 0.2) 10px, rgba(255, 255, 255, 0.06) 10px 23px, rgba(255, 255, 255, 0.2) 23px); }
.level-thumb { width: 18px; height: 17px; background: #f9f9f9; }
.level-fill { width: 18px; height: 62px; background: rgba(215, 242, 255, 0.4); }

/* Taskbar */
.taskbar {
  flex: none;
  height: 60px;
  display: flex;
  background: #1b2b30;
  color: #fff;
}
.start { width: 72px; align-items: center; justify-content: center; }
.task-search {
  width: 432px;
  display: flex;
  align-items: center;
  gap: 17px;
  padding: 0 4px 0 15px;
  border: 2px solid #c0c0c0;
  background: #f1f1f1;
  color: #222;
}
.task-search input {
  flex: 1;
  min-width: 0;
  border: 0;
  padding: 0;
  background: none;
  font-size: 22px;
}
.task-search input::placeholder { color: #2b2b2b; }
.apps { display: flex; }
.app {
  width: 75px;
  padding: 0;
  border: 0;
  display: grid;
  place-items: center;
  background: none;
}
.running {
  background: linear-gradient(#76b9ed, #76b9ed) bottom / 61px 3px no-repeat;
}
.current { background: linear-gradient(#76b9ed, #76b9ed) bottom / 100% 3px no-repeat, #49555a; }
.stacked { background-image: linear-gradient(90deg, #76b9ed 47px, #1b2b30 47px, #1b2b30 49px, #5b8fb9 49px); }
.ide { font: 700 9px "Open Sans", sans-serif; fill: #f08a2c; }
.tray { margin-left: auto; display: flex; align-items: center; gap: 14px; padding-right: 6px; }
.weather { display: flex; align-items: center; gap: 12px; margin-right: 18px; font-size: 21px; }
.overflow { margin-right: 4px; }
.clock {
  width: 92px;
  margin-right: 14px;
  display: flex;
  flex-direction: column;
  align-items: center;
  font-size: 17px;
  line-height: 28px;
}
.peek { width: 2px; height: 60px; margin-left: 15px; background: #7c8789; }
```
